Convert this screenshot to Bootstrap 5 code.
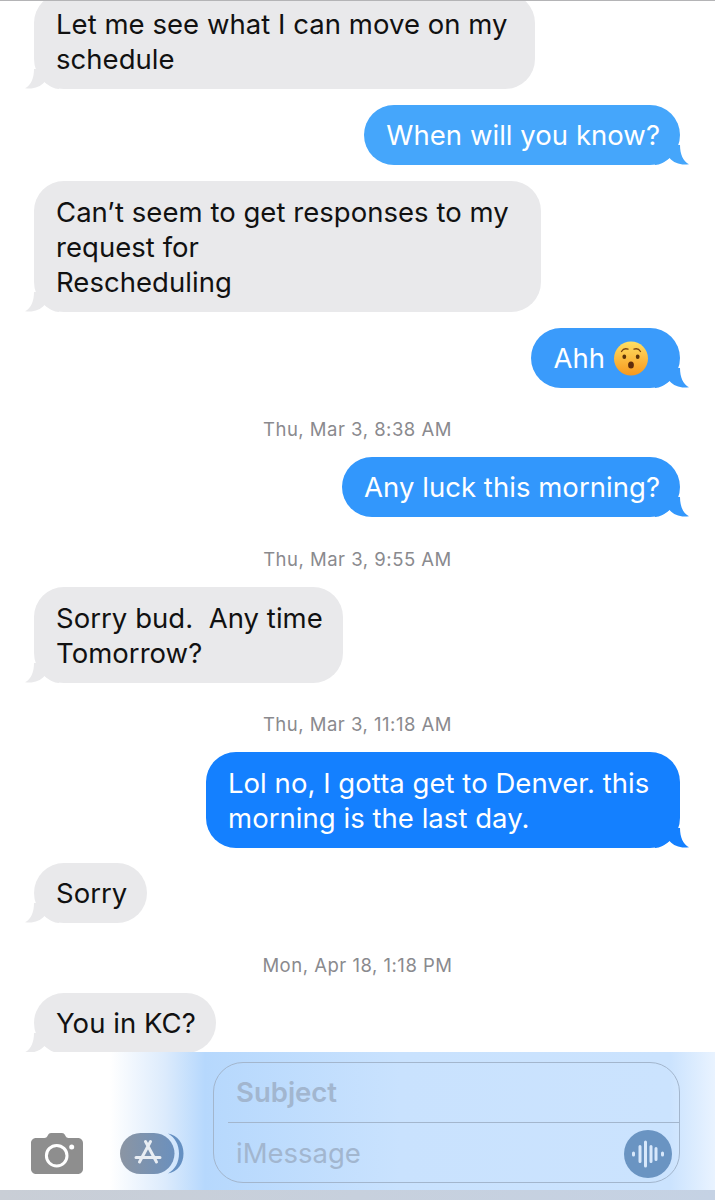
<!DOCTYPE html>
<html lang="en">
<head>
  <meta charset="UTF-8" />
  <meta name="viewport" content="width=device-width, initial-scale=1.0" />
  <title>Messages</title>
  <link href="https://cdn.jsdelivr.net/npm/bootstrap@5.3.0/dist/css/bootstrap.min.css" rel="stylesheet" />
  <style>
    body { background: #fff; font-family: Inter, "Liberation Sans", sans-serif; margin: 0; height: 1200px; overflow: hidden; }
    .top-rule { height: 1px; background: #b4b4b6; }
    .thread { height: 1051px; overflow: hidden; }
    .bubble-row { display: flex; }
    .bubble-row.me { justify-content: flex-end; padding-right: 35px; }
    .bubble-row.them { padding-left: 34px; }
    .bubble { position: relative; font-size: 27.5px; line-height: 35px; letter-spacing: .04px; padding: 14px 20px 12px 22px; border-radius: 30px; }
    .bubble.one-line { padding-top: 13px; padding-bottom: 12px; }
    .them .bubble { background: #e9e9eb; fill: #e9e9eb; color: #111; }
    .me .bubble { color: #fff; }
    .width-first { width: 501px; }
    .width-third { width: 507px; }
    .width-denver { width: 474px; }
    .tail { position: absolute; bottom: 0; width: 34px; height: 22px; }
    .me .tail { right: -9px; }
    .them .tail { left: -9px; transform: scaleX(-1); }
    .stamp { text-align: center; color: #8a8a8e; font-size: 18.5px; line-height: 22px; letter-spacing: .5px; }
    .blue-a { background: #45a6fb; fill: #45a6fb; }
    .blue-b { background: #3a9bfb; fill: #3a9bfb; }
    .blue-c { background: #3297fc; fill: #3297fc; }
    .blue-d { background: #1480ff; fill: #1480ff; }
    .face-icon { margin: 0 11px 0 8px; }
    .composer { height: 138px; padding: 10px 35px 7px 31px; background: linear-gradient(90deg, #fff 110px, #dcebfc 165px, #b6d8fd 205px, #c9e2fe 400px, #cbe3fe 670px, #e9f3ff 715px); }
    .tool-icons { margin-bottom: 9px; }
    .app-pill { margin-left: 37px; }
    .input-box { width: 467px; height: 121px; margin-left: 29px; border: 1.5px solid #a3b6cd; border-radius: 30px; color: #a2b6cf; font-size: 27.5px; }
    .subject-line { height: 60px; margin-left: 14px; padding-left: 8px; border-bottom: 1px solid #a3b6cd; font-weight: 600; line-height: 59px; }
    .message-line { height: 60px; padding: 2px 7px 0 22px; }
    .mic-btn { width: 48px; height: 48px; border-radius: 50%; background: #6a94c2; }
    .bottom-strip { height: 10px; background: linear-gradient(90deg, #c9ced6, #c5d2e4); }
  </style>
</head>
<body>
  <svg class="d-none">
    <symbol id="tail" viewBox="0 0 34 22"><path d="M0 2H25C25 11 28 18.500 34 21.200C26 22.600 19 20 14.500 15C10 19 5 22 0 22Z"/></symbol>
  </svg>
  <div class="top-rule"></div>
  <div class="thread">
    <div class="bubble-row them" style="margin-top:-8px">
      <div class="bubble width-first">Let me see what I can move on my<br>schedule
        <svg class="tail"><use href="#tail"/></svg>
      </div>
    </div>
    <div class="bubble-row me" style="margin-top:16px">
      <div class="bubble one-line blue-a">When will you know?
        <svg class="tail"><use href="#tail"/></svg>
      </div>
    </div>
    <div class="bubble-row them" style="margin-top:16px">
      <div class="bubble width-third">Can’t seem to get responses to my<br>request for<br>Rescheduling
        <svg class="tail"><use href="#tail"/></svg>
      </div>
    </div>
    <div class="bubble-row me" style="margin-top:16px">
      <div class="bubble one-line blue-b d-flex align-items-center">Ahh
        <svg class="face-icon" width="36" height="35" viewBox="0 0 36 35">
          <defs><linearGradient id="face" x1="0" y1="0" x2="0" y2="1"><stop offset="0" stop-color="#ffdf63"/><stop offset="1" stop-color="#f7981d"/></linearGradient></defs>
          <circle cx="18" cy="17.500" r="17" fill="url(#face)"/>
          <path d="M8.500 10.500C10 8 12.500 7.300 15 8.200M27.500 10.500C26 8 23.500 7.300 21 8.200" fill="none" stroke="#7a4210" stroke-width="1.300" stroke-linecap="round"/>
          <ellipse cx="11.300" cy="15.700" rx="1.900" ry="2.300" fill="#5b3208"/>
          <ellipse cx="24.700" cy="15.700" rx="1.900" ry="2.300" fill="#5b3208"/>
          <ellipse cx="18" cy="24" rx="2.900" ry="3.500" fill="#5e2c0c"/>
        </svg>
        <svg class="tail"><use href="#tail"/></svg>
      </div>
    </div>
    <div class="stamp" style="margin-top:30px">Thu, Mar 3, 8:38 AM</div>
    <div class="bubble-row me" style="margin-top:17px">
      <div class="bubble one-line blue-c">Any luck this morning?
        <svg class="tail"><use href="#tail"/></svg>
      </div>
    </div>
    <div class="stamp" style="margin-top:31px">Thu, Mar 3, 9:55 AM</div>
    <div class="bubble-row them" style="margin-top:17px">
      <div class="bubble">Sorry bud.&nbsp; Any time<br>Tomorrow?
        <svg class="tail"><use href="#tail"/></svg>
      </div>
    </div>
    <div class="stamp" style="margin-top:30px">Thu, Mar 3, 11:18 AM</div>
    <div class="bubble-row me" style="margin-top:17px">
      <div class="bubble width-denver blue-d">Lol no, I gotta get to Denver. this<br>morning is the last day.
        <svg class="tail"><use href="#tail"/></svg>
      </div>
    </div>
    <div class="bubble-row them" style="margin-top:15px">
      <div class="bubble one-line">Sorry
        <svg class="tail"><use href="#tail"/></svg>
      </div>
    </div>
    <div class="stamp" style="margin-top:31px">Mon, Apr 18, 1:18 PM</div>
    <div class="bubble-row them" style="margin-top:17px">
      <div class="bubble one-line">You in KC?
        <svg class="tail"><use href="#tail"/></svg>
      </div>
    </div>
  </div>
  <div class="composer d-flex align-items-end">
    <div class="tool-icons d-flex align-items-end">
      <svg width="52" height="41" viewBox="0 0 52 41">
        <path fill="#8e8e8e" d="M5 5H13.500C15 5 15.800 4.300 16.500 3L17 2C17.600 .7 18.600 0 20 0H31C32.400 0 33.400 .7 34 2L34.500 3C35.200 4.300 36 5 37.500 5H47C49.800 5 52 7.200 52 10V36C52 38.800 49.800 41 47 41H5C2.200 41 0 38.800 0 36V10C0 7.200 2.200 5 5 5Z"/>
        <circle cx="25.700" cy="22.700" r="10.300" fill="none" stroke="#fff" stroke-width="3"/>
        <circle cx="40.700" cy="14" r="2.500" fill="#fff"/>
      </svg>
      <svg class="app-pill" width="64" height="41" viewBox="0 0 64 41">
        <defs><linearGradient id="pill" x1="0" y1="0" x2="1" y2="0"><stop offset="0" stop-color="#8b95a3"/><stop offset="1" stop-color="#6b90bd"/></linearGradient></defs>
        <path d="M48 .5C58 2.500 63.500 10.500 63.500 20.500S58 38.500 48 40.500C55 36.500 59 29.500 59 20.500S55 4.500 48 .5Z" fill="#6590c2"/>
        <rect x="0" y="0" width="54.500" height="41" rx="20.500" fill="url(#pill)"/>
        <path d="M30.500 8.500L19.500 29M25.500 8.500L36.500 29M16 24.500H40" fill="none" stroke="#e8edf3" stroke-width="3" stroke-linecap="round"/>
      </svg>
    </div>
    <div class="input-box">
      <div class="subject-line">Subject</div>
      <div class="message-line d-flex align-items-center justify-content-between">
        <span>iMessage</span>
        <div class="mic-btn">
          <svg width="48" height="48" viewBox="0 0 48 48" fill="none" stroke="#d8e8fb" stroke-width="3" stroke-linecap="round">
            <path d="M9.500 23V25M16 16.500V31.500M21.500 12V36M27 16.500V31.500M32 18.500V29.500M38.500 23V25"/>
          </svg>
        </div>
      </div>
    </div>
  </div>
  <div class="bottom-strip"></div>
  <script src="https://cdn.jsdelivr.net/npm/bootstrap@5.3.0/dist/js/bootstrap.bundle.min.js"></script>
</body>
</html>
